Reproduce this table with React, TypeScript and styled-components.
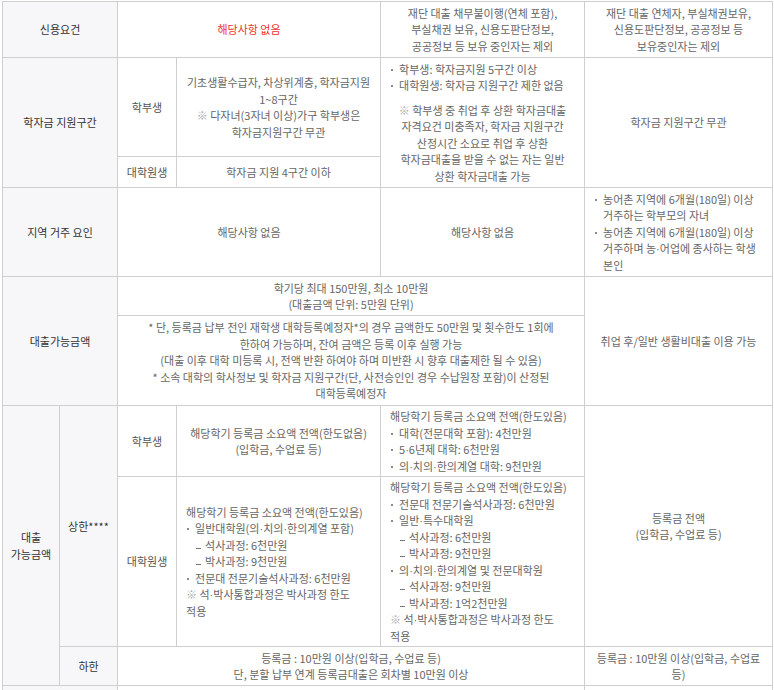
import styled, { createGlobalStyle } from "styled-components";

const GlobalStyle = createGlobalStyle`
  html, body {
    margin: 0;
    padding: 0;
    background: #fff;
  }
  body {
    font-family: "Noto Sans CJK KR", "Noto Sans", sans-serif;
    overflow: hidden;
  }
`;

const Page = styled.div`
  padding: 1px 0 0 2px;
`;

const Table = styled.table`
  width: 770px;
  border-collapse: collapse;
  table-layout: fixed;
  font-size: 11px;
  line-height: 16.5px;
  color: #666;
`;

const Row = styled.tr<{ $h?: number }>`
  height: ${({ $h }) => ($h ? `${$h}px` : "auto")};
`;

const Cell = styled.td<{ $align?: "left" | "center" }>`
  border: 1px solid #cfcfcf;
  padding: 2px 9px;
  text-align: ${({ $align }) => $align ?? "center"};
  vertical-align: middle;
  word-break: keep-all;
  white-space: nowrap;
`;

const Label = styled.th`
  border: 1px solid #cfcfcf;
  background: #f7f7f9;
  padding: 2px 4px;
  font-weight: normal;
  color: #333;
  text-align: center;
  vertical-align: middle;
  word-break: keep-all;
`;

const Sub = styled.td`
  border: 1px solid #cfcfcf;
  padding: 2px 4px;
  color: #555;
  text-align: center;
  vertical-align: middle;
`;

const Red = styled.span`
  color: #f0302a;
`;

const Mark = styled.span`
  color: #a8a8a8;
`;

// narrow middle dot, the CJK font draws it full width
const Mid = styled.span`
  font-family: "Liberation Sans", sans-serif;
  line-height: 0;
`;

const List = styled.ul`
  list-style: none;
  margin: 0;
  padding: 0;
  text-align: left;
`;

const Item = styled.li`
  position: relative;
  padding-left: 9px;
`;

const Bullet = styled.i`
  position: absolute;
  left: 1px;
  top: 8px;
  width: 2px;
  height: 2px;
  background: #8a8a8a;
`;

const DashItem = styled.li`
  position: relative;
  padding-left: 19px;
  &::before {
    content: "";
    position: absolute;
    left: 10px;
    top: 11px;
    width: 5px;
    height: 1px;
    background: #777;
  }
`;

const Note = styled.p<{ $gap?: number; $align?: "left" | "center" }>`
  margin: ${({ $gap }) => $gap ?? 0}px 0 0;
  text-align: ${({ $align }) => $align ?? "center"};
`;

const Dot = ({ children }: { children: React.ReactNode }) => (
  <Item>
    <Bullet />
    {children}
  </Item>
);

const m = <Mid>·</Mid>;

export default function App() {
  return (
    <>
      <GlobalStyle />
      <Page>
        <Table>
          <colgroup>
            <col style={{ width: 57 }} />
            <col style={{ width: 58 }} />
            <col style={{ width: 59 }} />
            <col style={{ width: 204 }} />
            <col style={{ width: 204 }} />
            <col style={{ width: 188 }} />
          </colgroup>
          <tbody>
            <Row $h={56}>
              <Label colSpan={2}>신용요건</Label>
              <Cell colSpan={2}>
                <Red>해당사항 없음</Red>
              </Cell>
              <Cell>
                재단 대출 채무불이행(연체 포함),
                <br />
                부실채권 보유, 신용도판단정보,
                <br />
                공공정보 등 보유 중인자는 제외
              </Cell>
              <Cell>
                재단 대출 연체자, 부실채권보유,
                <br />
                신용도판단정보, 공공정보 등
                <br />
                보유중인자는 제외
              </Cell>
            </Row>
            <Row $h={99}>
              <Label colSpan={2} rowSpan={2}>
                학자금 지원구간
              </Label>
              <Sub>학부생</Sub>
              <Cell>
                기초생활수급자, 차상위계층, 학자금지원
                <br />
                1~8구간
                <br />
                <Mark>※</Mark> 다자녀(3자녀 이상)가구 학부생은
                <br />
                학자금지원구간 무관
              </Cell>
              <Cell rowSpan={2} $align="left">
                <List>
                  <Dot>학부생: 학자금지원 5구간 이상</Dot>
                  <Dot>대학원생: 학자금 지원구간 제한 없음</Dot>
                </List>
                <Note $gap={8}>
                  <Mark>※</Mark> 학부생 중 취업 후 상환 학자금대출
                  <br />
                  자격요건 미충족자, 학자금 지원구간
                  <br />
                  산정시간 소요로 취업 후 상환
                  <br />
                  학자금대출을 받을 수 없는 자는 일반
                  <br />
                  상환 학자금대출 가능
                </Note>
              </Cell>
              <Cell rowSpan={2}>학자금 지원구간 무관</Cell>
            </Row>
            <Row $h={31}>
              <Sub>대학원생</Sub>
              <Cell>학자금 지원 4구간 이하</Cell>
            </Row>
            <Row $h={89}>
              <Label colSpan={2}>지역 거주 요인</Label>
              <Cell colSpan={2}>해당사항 없음</Cell>
              <Cell>해당사항 없음</Cell>
              <Cell $align="left">
                <List>
                  <Dot>
                    농어촌 지역에 6개월(180일) 이상
                    <br />
                    거주하는 학부모의 자녀
                  </Dot>
                  <Dot>
                    농어촌 지역에 6개월(180일) 이상
                    <br />
                    거주하며 농{m}어업에 종사하는 학생
                    <br />
                    본인
                  </Dot>
                </List>
              </Cell>
            </Row>
            <Row $h={39}>
              <Label colSpan={2} rowSpan={2}>
                대출가능금액
              </Label>
              <Cell colSpan={3}>
                학기당 최대 150만원, 최소 10만원
                <br />
                (대출금액 단위: 5만원 단위)
              </Cell>
              <Cell rowSpan={2}>취업 후/일반 생활비대출 이용 가능</Cell>
            </Row>
            <Row $h={90}>
              <Cell colSpan={3}>
                * 단, 등록금 납부 전인 재학생 대학등록예정자*의 경우 금액한도 50만원 및 횟수한도 1회에
                <br />
                한하여 가능하며, 잔여 금액은 등록 이후 실행 가능
                <br />
                (대출 이후 대학 미등록 시, 전액 반환 하여야 하며 미반환 시 향후 대출제한 될 수 있음)
                <br />
                * 소속 대학의 학사정보 및 학자금 지원구간(단, 사전승인인 경우 수납원장 포함)이 산정된
                <br />
                대학등록예정자
              </Cell>
            </Row>
            <Row $h={71}>
              <Label rowSpan={3}>
                대출
                <br />
                가능금액
              </Label>
              <Label rowSpan={2}>상한****</Label>
              <Sub>학부생</Sub>
              <Cell>
                해당학기 등록금 소요액 전액(한도없음)
                <br />
                (입학금, 수업료 등)
              </Cell>
              <Cell $align="left">
                <Note $align="left">해당학기 등록금 소요액 전액(한도있음)</Note>
                <List>
                  <Dot>대학(전문대학 포함): 4천만원</Dot>
                  <Dot>5{m}6년제 대학: 6천만원</Dot>
                  <Dot>의{m}치의{m}한의계열 대학: 9천만원</Dot>
                </List>
              </Cell>
              <Cell rowSpan={2}>
                등록금 전액
                <br />
                (입학금, 수업료 등)
              </Cell>
            </Row>
            <Row $h={170}>
              <Sub>대학원생</Sub>
              <Cell $align="left">
                <Note $align="left">해당학기 등록금 소요액 전액(한도있음)</Note>
                <List>
                  <Dot>일반대학원(의{m}치의{m}한의계열 포함)</Dot>
                  <DashItem>석사과정: 6천만원</DashItem>
                  <DashItem>박사과정: 9천만원</DashItem>
                  <Dot>전문대 전문기술석사과정: 6천만원</Dot>
                </List>
                <Note $align="left">
                  <Mark>※</Mark> 석{m}박사통합과정은 박사과정 한도
                  <br />
                  적용
                </Note>
              </Cell>
              <Cell $align="left">
                <Note $align="left">해당학기 등록금 소요액 전액(한도있음)</Note>
                <List>
                  <Dot>전문대 전문기술석사과정: 6천만원</Dot>
                  <Dot>일반{m}특수대학원</Dot>
                  <DashItem>석사과정: 6천만원</DashItem>
                  <DashItem>박사과정: 9천만원</DashItem>
                  <Dot>의{m}치의{m}한의계열 및 전문대학원</Dot>
                  <DashItem>석사과정: 9천만원</DashItem>
                  <DashItem>박사과정: 1억2천만원</DashItem>
                </List>
                <Note $align="left">
                  <Mark>※</Mark> 석{m}박사통합과정은 박사과정 한도
                  <br />
                  적용
                </Note>
              </Cell>
            </Row>
            <Row $h={39}>
              <Label>하한</Label>
              <Cell colSpan={3}>
                등록금 : 10만원 이상(입학금, 수업료 등)
                <br />
                단, 분할 납부 연계 등록금대출은 회차별 10만원 이상
              </Cell>
              <Cell>
                등록금 : 10만원 이상(입학금, 수업료
                <br />
                등)
              </Cell>
            </Row>
            <Row $h={40}>
              <Label colSpan={2}>&nbsp;</Label>
              <Cell colSpan={3}>&nbsp;</Cell>
              <Cell>&nbsp;</Cell>
            </Row>
          </tbody>
        </Table>
      </Page>
    </>
  );
}
